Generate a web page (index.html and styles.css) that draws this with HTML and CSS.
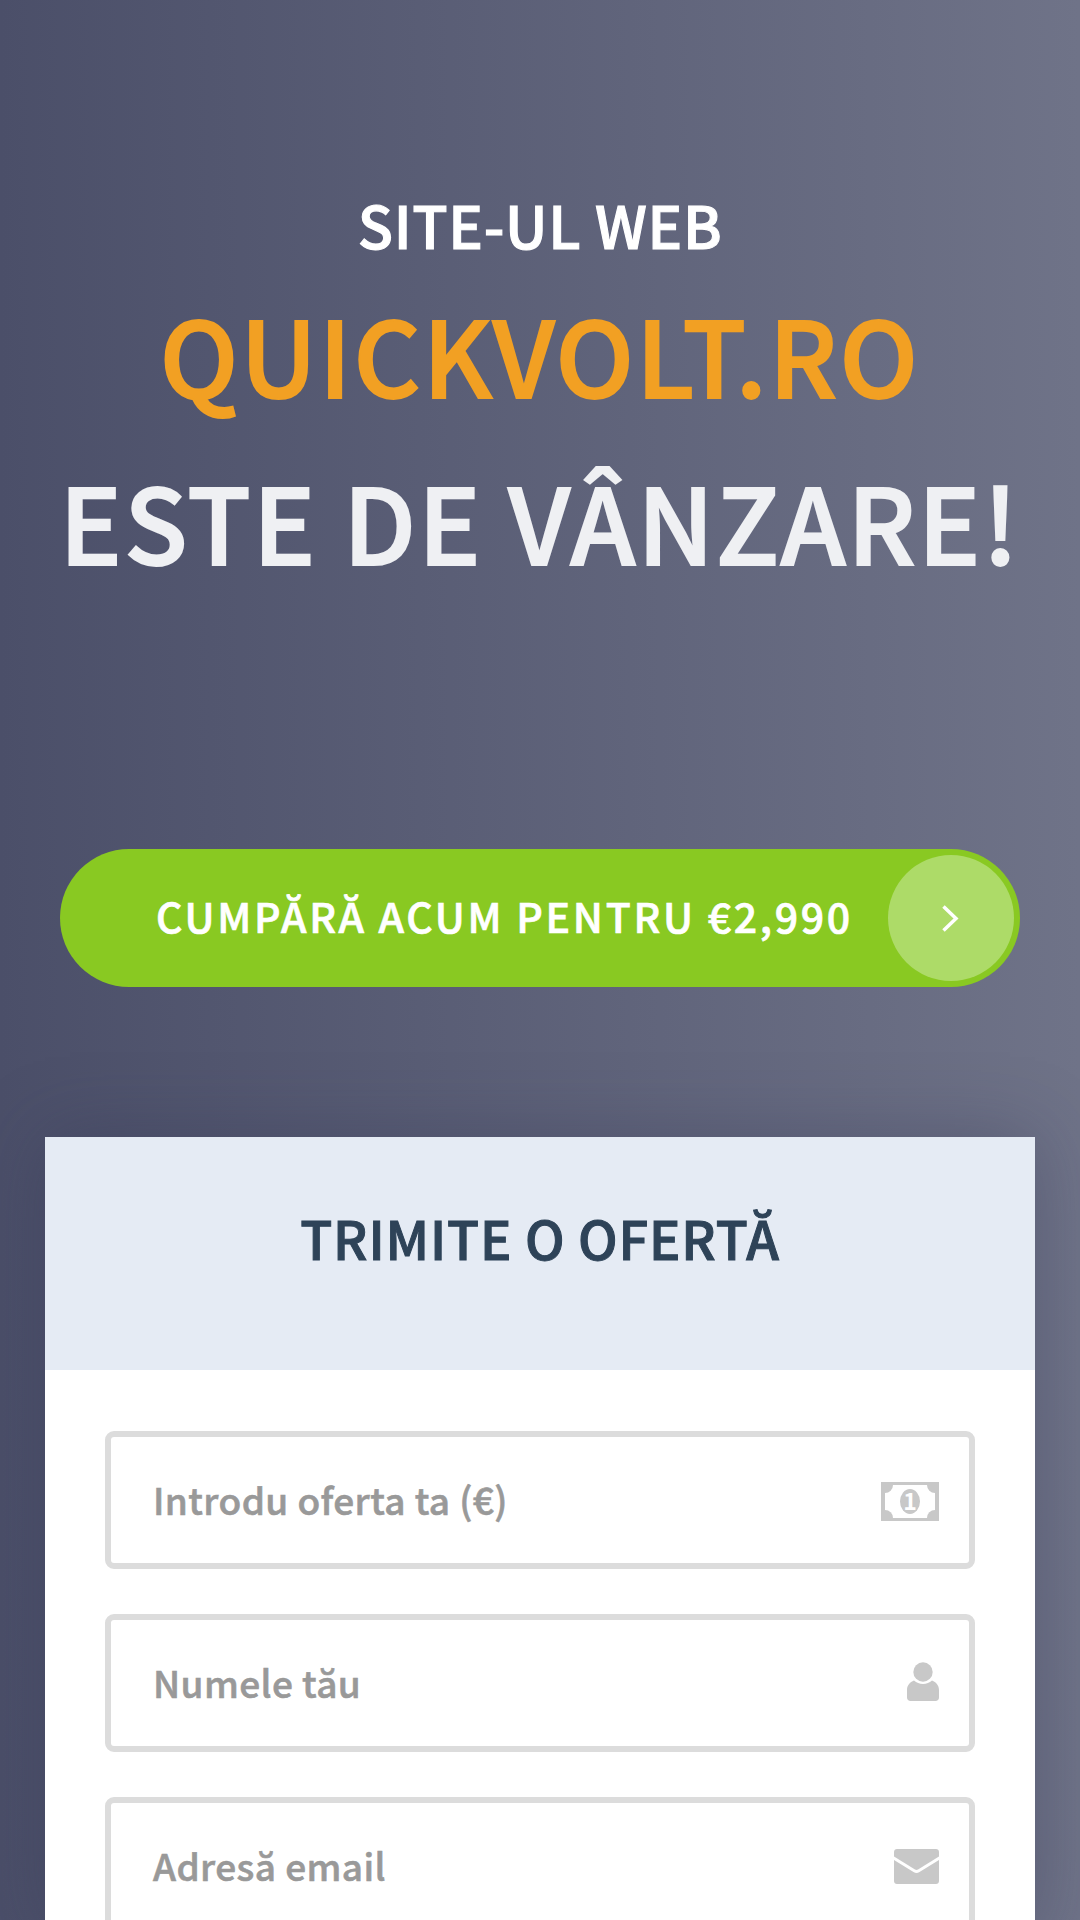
FILE: index.html
```html
<!DOCTYPE html>
<html lang="ro">
<head>
<meta charset="utf-8">
<title>QUICKVOLT.RO</title>
<link rel="stylesheet" href="styles.css">
</head>
<body>
<main class="page">
  <section class="hero">
    <h2 class="kicker">SITE-UL WEB</h2>
    <h1 class="domain">QUICKVOLT.RO</h1>
    <h1 class="sale">ESTE DE VÂNZARE!</h1>
  </section>
  <a class="buy" href="#">
    <span class="buy-label">CUMPĂRĂ ACUM PENTRU €2,990</span>
    <span class="buy-circle">
      <svg class="chevron" width="18" height="29" viewBox="0 0 18 29"><path d="M2.500 2.500l12.500 12L2.500 26.500" fill="none" stroke="#fff" stroke-width="3.500"/></svg>
    </span>
  </a>
  <section class="card">
    <header class="card-head"><h3 class="card-title">TRIMITE O OFERTĂ</h3></header>
    <form class="card-body">
      <div class="field">
        <span class="placeholder">Introdu oferta ta (€)</span>
        <svg class="icon icon-money" width="58" height="39" viewBox="0 0 58 39"><path fill-rule="evenodd" d="M0 0h58v39H0zM4 3v33h50V3z" fill="#c8c8c8"/><circle cx="4" cy="3" r="8" fill="#c8c8c8"/><circle cx="54" cy="3" r="8" fill="#c8c8c8"/><circle cx="4" cy="36" r="8" fill="#c8c8c8"/><circle cx="54" cy="36" r="8" fill="#c8c8c8"/><ellipse cx="29" cy="19.500" rx="10" ry="12.500" fill="#c8c8c8"/><text class="bill-digit" x="29" y="27.500" text-anchor="middle">1</text></svg>
      </div>
      <div class="field">
        <span class="placeholder">Numele tău</span>
        <svg class="icon icon-user" width="32" height="39" viewBox="0 0 32 39"><circle cx="16" cy="10" r="9.700" fill="#c8c8c8"/><path d="M7 18.500c2.500 2.300 5.500 3.500 9 3.500s6.500-1.200 9-3.500c4.200 1.500 7 5 7 9.500v7.500c0 2-1.500 3.500-3.500 3.500h-25C1.500 39 0 37.500 0 35.500V28c0-4.500 2.800-8 7-9.500z" fill="#c8c8c8"/></svg>
      </div>
      <div class="field">
        <span class="placeholder">Adresă email</span>
        <svg class="icon icon-mail" width="45" height="35" viewBox="0 0 45 35"><path d="M3 0h39c1.700 0 3 1.300 3 3v4.500L24 20.500c-1 .6-2 .6-3 0L0 7.500V3c0-1.700 1.300-3 3-3z" fill="#c8c8c8"/><path d="M0 11l19.500 12c2 1.300 4 1.300 6 0L45 11v21c0 1.700-1.300 3-3 3H3c-1.700 0-3-1.300-3-3z" fill="#c8c8c8"/></svg>
      </div>
    </form>
  </section>
</main>
</body>
</html>
```
FILE: styles.css
```css
* { box-sizing: border-box; }
html, body { margin: 0; padding: 0; height: 1920px; overflow: hidden; }
body {
  font-family: "Noto Sans CJK SC", "Noto Sans", sans-serif;
  background: linear-gradient(90deg, #4b4f69 0%, #6f7388 100%);
}
.page { display: flex; flex-direction: column; align-items: center; height: 1920px; overflow: hidden; }
.hero { width: 100%; padding-top: 184px; text-align: center; height: 849px; flex-shrink: 0; }
.kicker, .domain, .sale, .card-title { margin: 0; font-weight: 500; }
.kicker { font-size: 58px; line-height: 80px; color: #fff; letter-spacing: .65px; -webkit-text-stroke: 1.100px #fff; }
.domain { font-size: 104px; line-height: 130px; margin-top: 24px; color: #f2a023; letter-spacing: 2.300px; -webkit-text-stroke: 2px #f2a023; }
.sale { font-size: 104px; line-height: 130px; margin-top: 37px; color: #eff0f3; letter-spacing: 2.200px; -webkit-text-stroke: 2px #eff0f3; }
.buy {
  width: 960px; height: 138px; border-radius: 69px; background: #89c922; flex-shrink: 0;
  display: flex; align-items: center; justify-content: space-between;
  padding: 6px 6px 6px 96px; text-decoration: none;
}
.buy-label { font-size: 41px; font-weight: 500; color: #fff; letter-spacing: 2.700px; -webkit-text-stroke: .7px #fff; margin-bottom: 6px; }
.buy-circle {
  width: 126px; height: 126px; border-radius: 50%; background: #addb68;
  display: flex; align-items: center; justify-content: center;
}
.chevron { display: block; margin-right: 2px; }
.card {
  width: 990px; margin-top: 150px; background: #fff;
  box-shadow: 0 0 70px rgba(50, 52, 80, .35); flex-shrink: 0;
}
.card-head { height: 233px; background: #e5ebf4; display: flex; align-items: center; justify-content: center; padding-bottom: 34px; }
.card-title { font-size: 52.500px; line-height: 70px; color: #2e4358; letter-spacing: .85px; -webkit-text-stroke: 1px #2e4358; }
.card-body { padding: 61px 60px 0; display: flex; flex-direction: column; gap: 45px; }
.field {
  height: 138px; border: 6px solid #dcdcdc; border-radius: 9px; flex-shrink: 0;
  display: flex; align-items: center; justify-content: space-between;
  padding: 0 30px 0 42px; background: #fff;
}
.placeholder { font-size: 37px; font-weight: 500; color: #999; letter-spacing: .4px; -webkit-text-stroke: .6px #999; margin-bottom: 3px; }
.icon { display: block; }
.icon-money { margin-top: 3px; }
.icon-user { margin-bottom: 3px; }
.icon-mail { margin-top: 1px; }
.bill-digit { font-size: 23px; font-weight: 700; fill: #fff; }
```
